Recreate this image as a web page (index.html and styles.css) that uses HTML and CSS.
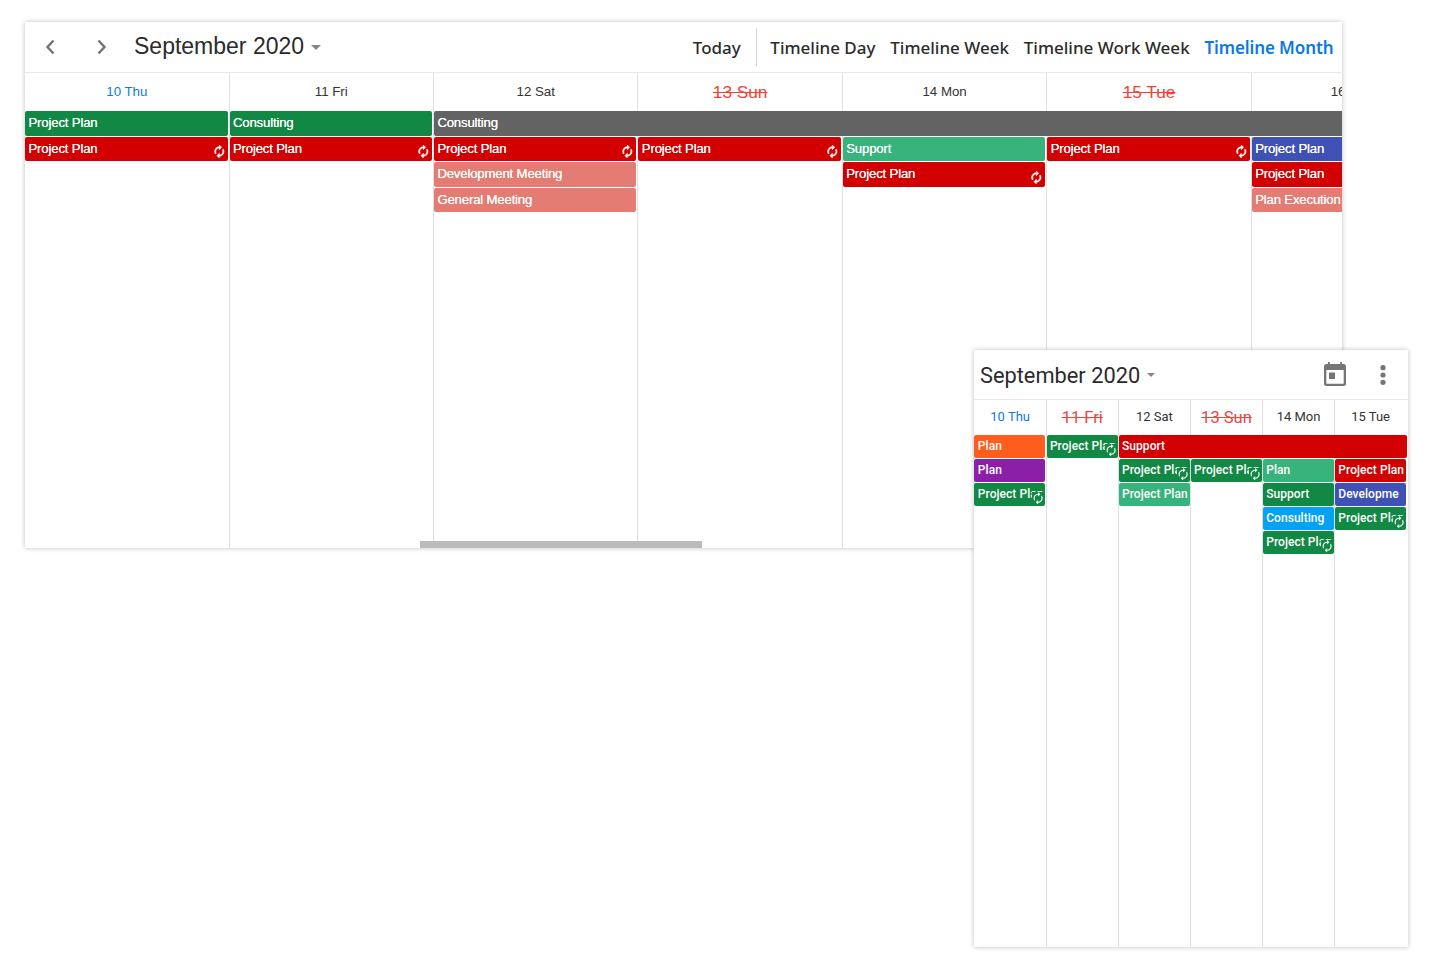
FILE: index.html
```html
<!DOCTYPE html>
<html lang="en">
<head>
<meta charset="utf-8">
<title>Scheduler</title>
<link rel="stylesheet" href="styles.css">
</head>
<body>
<svg class="defs" width="0" height="0">
  <symbol id="repeat" viewBox="3 1 18 22" preserveAspectRatio="xMinYMid meet"><path d="M12 6v3l4-4-4-4v3c-4.420 0-8 3.580-8 8 0 1.570.46 3.030 1.240 4.260L6.700 14.800A5.900 5.900 0 0 1 6 12c0-3.310 2.690-6 6-6zm6.760 1.740L17.300 9.200c.44.84.7 1.790.7 2.800 0 3.310-2.690 6-6 6v-3l-4 4 4 4v-3c4.420 0 8-3.580 8-8 0-1.570-.46-3.030-1.240-4.260z"/></symbol>
</svg>
<section class="panel desktop">
  <header class="toolbar">
    <svg class="chev" viewBox="0 0 10 16"><path d="M8.500 1.500 2.500 8l6 6.500"/></svg>
    <svg class="chev" viewBox="0 0 10 16"><path d="M1.500 1.500 7.500 8l-6 6.500"/></svg>
    <h1 class="title">September 2020</h1>
    <i class="caret"></i>
    <nav class="views">
      <span class="view today">Today</span>
      <span class="view day">Timeline Day</span>
      <span class="view week">Timeline Week</span>
      <span class="view work">Timeline Work Week</span>
      <span class="view active">Timeline Month</span>
    </nav>
  </header>
  <div class="days">
    <div class="col"><div class="date current">10 Thu</div>
      <div class="event green">Project Plan</div>
      <div class="event red">Project Plan<svg class="icon"><use href="#repeat"/></svg></div></div>
    <div class="col"><div class="date">11 Fri</div>
      <div class="event green">Consulting</div>
      <div class="event red">Project Plan<svg class="icon"><use href="#repeat"/></svg></div></div>
    <div class="col"><div class="date">12 Sat</div>
      <div class="event gray span-rest">Consulting</div>
      <div class="event red">Project Plan<svg class="icon"><use href="#repeat"/></svg></div>
      <div class="event rose">Development Meeting</div>
      <div class="event rose">General Meeting</div></div>
    <div class="col"><div class="date off">13 Sun</div>
      <div class="event blank"></div>
      <div class="event red">Project Plan<svg class="icon"><use href="#repeat"/></svg></div></div>
    <div class="col"><div class="date">14 Mon</div>
      <div class="event blank"></div>
      <div class="event mint">Support</div>
      <div class="event red">Project Plan<svg class="icon"><use href="#repeat"/></svg></div></div>
    <div class="col"><div class="date off">15 Tue</div>
      <div class="event blank"></div>
      <div class="event red">Project Plan<svg class="icon"><use href="#repeat"/></svg></div></div>
    <div class="col"><div class="date">16 Wed</div>
      <div class="event blank"></div>
      <div class="event indigo">Project Plan</div>
      <div class="event red">Project Plan</div>
      <div class="event rose">Plan Execution</div></div>
  </div>
  <div class="thumb"></div>
</section>

<section class="panel mobile">
  <header class="toolbar">
    <h2 class="title">September 2020</h2>
    <i class="caret"></i>
    <svg class="calendar" viewBox="0 0 22 24"><path fill-rule="evenodd" d="M4 0h1.800v2h10.400V0H18v2h1.500Q22 2 22 4.500v17Q22 24 19.500 24h-17Q0 24 0 21.500v-17Q0 2 2.500 2H4zM2.300 8v13.700h17.400V8z"/><path d="M5 10.500h6v6.500H5z"/></svg>
    <svg class="more" viewBox="0 0 6 20"><circle cx="3" cy="2.700" r="2.600"/><circle cx="3" cy="10" r="2.600"/><circle cx="3" cy="17.300" r="2.600"/></svg>
  </header>
  <div class="days">
    <div class="col"><div class="date current">10 Thu</div>
      <div class="event orange">Plan</div>
      <div class="event purple">Plan</div>
      <div class="event green">Project Plan<svg class="icon"><use href="#repeat"/></svg></div></div>
    <div class="col"><div class="date off">11 Fri</div>
      <div class="event green">Project Plan<svg class="icon"><use href="#repeat"/></svg></div></div>
    <div class="col"><div class="date">12 Sat</div>
      <div class="event red span-rest">Support</div>
      <div class="event green">Project Plan<svg class="icon"><use href="#repeat"/></svg></div>
      <div class="event mint">Project Plan</div></div>
    <div class="col"><div class="date off">13 Sun</div>
      <div class="event blank"></div>
      <div class="event green">Project Plan<svg class="icon"><use href="#repeat"/></svg></div></div>
    <div class="col"><div class="date">14 Mon</div>
      <div class="event blank"></div>
      <div class="event mint">Plan</div>
      <div class="event green">Support</div>
      <div class="event sky">Consulting</div>
      <div class="event green">Project Plan<svg class="icon"><use href="#repeat"/></svg></div></div>
    <div class="col"><div class="date">15 Tue</div>
      <div class="event blank"></div>
      <div class="event red">Project Plan</div>
      <div class="event indigo">Developme</div>
      <div class="event green">Project Plan<svg class="icon"><use href="#repeat"/></svg></div></div>
  </div>
</section>
</body>
</html>
```
FILE: styles.css
```css
* { box-sizing: border-box; }
body { margin: 0; height: 967px; overflow: hidden; background: #fff; font-family: "Liberation Sans", Arial, sans-serif; position: relative; }
.defs { position: absolute; }
.panel { position: absolute; display: flex; flex-direction: column; overflow: hidden; background: #fff; box-shadow: 0 0 5px rgba(0,0,0,.25); }
.desktop { left: 25px; top: 22px; width: 1317px; height: 526px; }
.mobile { left: 974px; top: 350px; width: 434px; height: 597px; font-family: Roboto, sans-serif; }
.toolbar { display: flex; align-items: center; flex: none; border-bottom: 1px solid #e8e8e8; }
.title { margin: 0; font-weight: 400; color: #2b2b2b; white-space: nowrap; }
.caret { border: 5px solid transparent; border-top-color: #858585; border-bottom: 0; }
.days { display: flex; flex: 1; }
.col { flex: none; border-left: 1px solid #e0e0e0; }
.col:first-child { border-left-color: transparent; }
.date { display: flex; justify-content: center; align-items: center; color: #333; white-space: nowrap; }
.current { color: #0d7bdc; }
.off { color: #f44336; text-decoration: line-through; }
.event { position: relative; overflow: hidden; border-radius: 2px; color: #fff; white-space: nowrap; }
.icon { position: absolute; fill: #fff; }
.green { background: #118844; }
.red { background: #d20000; }
.gray { background: #636363; }
.rose { background: #e57c73; }
.mint { background: #37b37c; }
.indigo { background: #3f51b5; }
.orange { background: #ff5c1e; }
.purple { background: #8c1fa8; }
.sky { background: #03a2f2; }
.blank { background: none; }

.desktop .toolbar { height: 51px; padding-left: 20px; }
.chev { width: 10px; height: 16px; margin-right: 42px; fill: none; stroke: #757575; stroke-width: 2.500; }
.chev + .chev { margin-right: 27px; }
.desktop .title { width: 169px; font-size: 23px; line-height: 26px; margin-top: -2px; }
.desktop .caret { margin-left: 8px; }
.views { display: flex; align-items: center; margin-left: auto; padding-right: 9px; font: 500 17px/37px "Noto Sans", sans-serif; color: #2b2b2b; }
.view { margin-left: 14.800px; padding-top: 1px; white-space: nowrap; }
.today { margin: 0; padding-right: 15px; border-right: 1px solid #d6d6d6; }
.day { margin-left: 13.500px; }
.active { color: #0b78e3; font-weight: 600; letter-spacing: -.1px; margin-right: -.5px; }
.desktop .days { margin-left: -.9px; }
.desktop .col { width: 204.450px; }
.desktop .date { height: 38px; padding-bottom: 2px; font-size: 13.300px; letter-spacing: -.02px; }
.desktop .off { font-size: 17.300px; padding: 0; }
.desktop .event { height: 24.500px; margin: 0 1px 1.100px 0; padding-left: 3.400px; font-size: 13.200px; line-height: 23px; letter-spacing: -.18px; text-shadow: 0 0 .6px #fff; }
.desktop .event.span-rest { width: 920px; }
.desktop .icon { right: 3px; top: 8.500px; width: 11px; height: 13px; stroke: #fff; stroke-width: .9px; }
.thumb { position: absolute; left: 395px; top: 519px; width: 282px; height: 7px; background: #bbb; }

.mobile .toolbar { height: 50px; padding: 0 22px 0 6px; }
.mobile .title { width: 160px; font-size: 21.800px; padding-top: 2px; }
.mobile .caret { margin-left: 7px; border-width: 4.500px; border-bottom: 0; }
.calendar { width: 22px; height: 24px; margin: -2px 0 0 auto; fill: #757575; }
.more { width: 6px; height: 20px; margin-left: 34px; fill: #757575; }
.mobile .days { margin-left: -.4px; }
.mobile .col { width: 72.100px; }
.mobile .date { height: 35px; padding-bottom: 2px; font-size: 13px; }
.mobile .off { font-size: 16.500px; padding: 0; color: #e8473f; }
.mobile .event { height: 23px; margin: 0 0 1px -.2px; padding-left: 3.400px; font-size: 12px; font-weight: 500; line-height: 22px; letter-spacing: .05px; }
.mobile .event:not(.span-rest) { width: 71px; }
.mobile .event.span-rest { width: 288.600px; }
.mobile .icon { right: 0; top: 8.600px; width: 13px; height: 12.500px; padding-left: 1px; background: #118844; }
```
